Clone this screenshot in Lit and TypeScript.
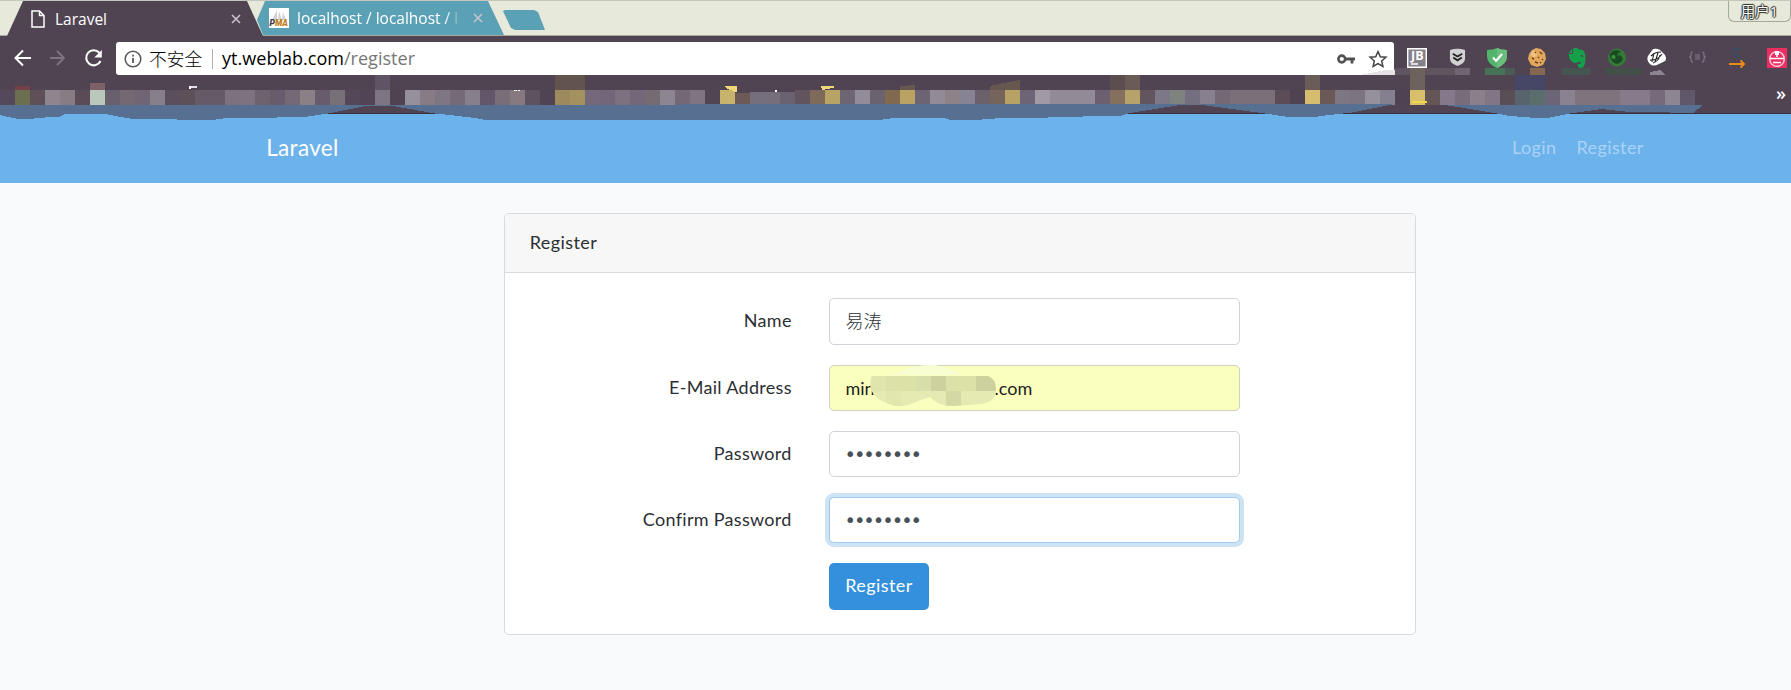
import { LitElement, html, svg, css } from "lit";
import { customElement } from "lit/decorators.js";

// Bookmark mosaic, one colour for every 15px cell.
const TILES = (
  "54485a 6b6f4f 5f5058 8e858f 877c84 5a4b56 b9c8bb 69606e 746873 6f6574 87808a 5b4f5c 5d5058 665a68 665a68 7d717d " +
  "7d7280 6f626f 665c6b 746a76 8a8086 665c6b 777079 54475a 524454 7e7584 4f4352 95909c 877c85 7e7782 756a76 87808a " +
  "61566a 796d78 86797f 5d5260 4f4354 9c8a5c a3925f 73697a 72667a 7c717f 72687a 756b72 8d8691 736875 7f7580 514453 " +
  "c7b36b 6d5a56 756e7c 776e7b 6b6271 61545f 7d6a58 b7a366 6d6571 928b99 6b6270 80694f b9a263 6d6473 928a96 8d8288 " +
  "868394 6c616b 75645c b7a167 6d6575 a199a6 928b97 928b97 928b97 6a6070 84705c b7a36a 62555f 7d7787 7f837f 746f80 " +
  "88808f 736876 7b6f7a 7b6f7a 7b6f7a 5b4c58 4f4352 d5bd70 6a5956 7d7683 7c7480 968f9c 858090 4f4353 d8bf6c 655556 " +
  "83798a 776c78 8a808b 817686 594d56 57646b 5b6d6d 6b6577 8a8290 7f737d 7f737d 7f737d 857b8a 857b8a 756b7a 8e8593 60586a"
).split(" ");

// x, y, width, height, colour of the fainter cells above the main row.
const SPOTS: [number, number, number, number, string][] = [
  [15, 86, 15, 4, "#74404a"], [90, 83, 15, 7, "#7d6167"], [375, 75, 15, 15, "#5f5465"],
  [555, 75, 30, 15, "#62534f"], [1110, 75, 15, 15, "#5c4d4e"], [1125, 75, 15, 15, "#6b5b57"],
  [1305, 75, 15, 15, "#6b5c57"], [1410, 68, 15, 22, "#6e625e"], [1515, 75, 30, 15, "#464666"],
  [1394, 68, 16, 7, "#5f5562"], [1425, 68, 30, 7, "#60555f"], [1455, 68, 15, 7, "#6e6571"],
  [1485, 68, 20, 7, "#467355"], [1505, 68, 10, 7, "#4c5a55"], [1530, 68, 15, 7, "#866850"],
  [1562, 68, 28, 7, "#455650"], [1605, 68, 37, 7, "#43504a"],
  [189, 86, 8, 2, "#e5dfe8"], [189, 86, 2, 3, "#ffffff"], [514, 90, 3, 1, "#ffffff"], [518, 90, 2, 1, "#ffffff"], [775, 90, 2, 2, "#ffffff"],
  [1412, 101, 15, 2, "#f0d84a"],
];

@customElement("browser-chrome")
class BrowserChrome extends LitElement {
  static styles = css`
    :host { display: block; position: relative; width: 1791px; height: 114px; background: #504453; color: #fff; font-family: "Open Sans", "Noto Sans CJK SC", sans-serif; }
    svg { display: block; flex: none; overflow: visible; }
    .strip { display: flex; height: 36px; background: #e7e9da; box-sizing: border-box; border-bottom: 1px solid #a9a9a2; border-top: 1px solid #c5c7be; }
    .tab { display: flex; align-items: center; height: 35px; box-sizing: border-box; font-size: 15.5px; }
    .tab span { flex: 1; white-space: nowrap; overflow: hidden; line-height: 24px; }
    .one { width: 256px; margin-left: 7px; padding: 0 22px 0 24px; background: #504453; clip-path: polygon(16px 0, 240px 0, 256px 100%, 0 100%); }
    .one svg:first-child { margin-right: 10px; }
    .two { width: 247px; height: 34px; margin-left: -6px; padding: 0 21px 0 12px; background: #5ba1b6; clip-path: polygon(8px 0, 231px 0, 247px 100%, 6px 100%, 0 55%); }
    .two svg:first-child { margin-right: 8px; }
    .two span { -webkit-mask-image: linear-gradient(90deg, #000 148px, transparent 164px); mask-image: linear-gradient(90deg, #000 148px, transparent 164px); }
    .new { width: 42px; height: 20px; margin: 9px 0 0 -1px; background: #5ba1b6; clip-path: polygon(2px 0, 31px 0, 35px 2px, 42px 20px, 12px 20px, 8px 18px, 0 1px); }
    .user { margin-left: auto; width: 63px; height: 21px; border: 1px solid #a6a79f; border-top: 0; border-radius: 0 0 6px 6px; box-sizing: border-box; text-align: center; font-size: 14.5px; line-height: 22px; text-shadow: 1px 0 1px #222, -1px 0 1px #222, 0 1px 1px #222, 0 -1px 1px #222; }
    .bar { display: flex; align-items: center; height: 39px; box-sizing: border-box; }
    .nav { display: flex; flex: none; width: 116px; padding: 5px 0 0 12px; box-sizing: border-box; gap: 13px; }
    .omni { display: flex; flex: none; align-items: center; width: 1278px; height: 33px; margin-top: 6px; background: #fff; border-radius: 3px; color: #000; box-sizing: border-box; padding: 0 7px 0 8px; font-size: 18px; }
    .cn { font-family: "Noto Sans CJK SC", sans-serif; font-weight: 300; font-size: 17.7px; margin-left: 7px; line-height: 26px; padding-bottom: 2px; }
    .sep { width: 1px; height: 20px; background: #b0b0b0; margin: 0 9px 0 10px; }
    .url { flex: 1; line-height: 26px; letter-spacing: 0.02px; padding-bottom: 2px; }
    .url i { font-style: normal; color: #777; }
    .keys { display: flex; gap: 14px; }
    .ext { display: flex; flex: none; margin-left: 3px; padding-top: 5px; }
    .ext div { width: 40px; display: flex; justify-content: center; flex: none; }
    .mosaic { position: absolute; left: 0; top: 0; z-index: 1; }
    .more { position: absolute; left: 1776px; top: 81px; font-size: 18px; font-weight: 600; line-height: 24px; }
    .jb { font: 700 12.5px "Open Sans", sans-serif; }
    .pma { font: italic 900 8.500px "Roboto", sans-serif; }
  `;
  render() {
    const close = html`<svg width="10" height="10" viewBox="0 0 10 10"><path d="M1 1l8 8M9 1L1 9" stroke="#c9c2cd" stroke-width="1.6" /></svg>`;
    return html`
      <div class="strip">
        <div class="tab one">
          <svg width="14" height="18" viewBox="0 0 14 18"><path d="M1 1h7.5L13 5.500V17H1zM8.500 1v4.500H13" fill="none" stroke="#fff" stroke-width="1.5" /></svg>
          <span>Laravel</span>${close}
        </div>
        <div class="tab two">
          <svg width="20" height="20" viewBox="0 0 20 20"><path d="M0 0h20v20H0z" fill="#fff" /><path d="M3 12L8 2v10zM9 12l1-9 3 9zM13 12l1-8 3 8z" fill="#d2d2d2" /><text x="0.500" y="18" class="pma" fill="#363650">P<tspan fill="#bf7b15">MA</tspan></text></svg>
          <span>localhost / localhost / l</span>${close}
        </div>
        <div class="new"></div>
        <div class="user">用户1</div>
      </div>
      <div class="bar">
        <div class="nav">
          <svg width="22" height="22" viewBox="0 0 22 22"><path d="M19 11H4M11 3.500L3.500 11l7.500 7.500" fill="none" stroke="#fff" stroke-width="2" /></svg>
          <svg width="22" height="22" viewBox="0 0 22 22"><path d="M3 11h14M10 4l7 7-7 7" fill="none" stroke="#7e7481" stroke-width="1.8" /></svg>
          <svg width="24" height="22" viewBox="0 0 24 22"><path d="M18.500 14A7.500 7.500 0 1 1 17.300 5.800" fill="none" stroke="#fff" stroke-width="2.100" /><path d="M19.800 3v7.500h-7.500z" fill="#fff" /></svg>
        </div>
        <div class="omni">
          <svg width="18" height="18" viewBox="0 0 18 18"><circle cx="9" cy="9" r="7.800" fill="none" stroke="#5a5a5a" stroke-width="1.600" /><path d="M9 8v5M9 4.800v1.800" stroke="#5a5a5a" stroke-width="1.800" /></svg>
          <span class="cn">不安全</span><span class="sep"></span>
          <span class="url">yt.weblab.com<i>/register</i></span>
          <div class="keys">
            <svg width="18" height="18" viewBox="0 0 18 18"><circle cx="4.800" cy="9" r="3.400" fill="none" stroke="#505050" stroke-width="2.600" /><path d="M8 9h10M15 9v4.500" stroke="#505050" stroke-width="2.800" /></svg>
            <svg width="18" height="18" viewBox="0 0 18 18"><path d="M9 1.500l2.300 5.200 5.600.5-4.200 3.700 1.200 5.500L9 13.500l-4.900 2.900 1.200-5.500L1.100 7.200l5.600-.5z" fill="none" stroke="#444" stroke-width="1.500" /></svg>
          </div>
        </div>
        <div class="ext">
          <div><svg width="20" height="20" viewBox="0 0 20 20"><path d="M.7.7h18.600v18.600H.7z" fill="#85808a" stroke="#fff" stroke-width="1.400" /><text x="4" y="12" class="jb" fill="#fff">JB</text><path d="M4 16h7" stroke="#fff" stroke-width="1.500" /></svg></div>
          <div><svg width="17" height="19" viewBox="0 0 18 20"><path d="M1 2Q9-.5 17 2v9q0 5-8 8-8-3-8-8z" fill="#d2d2d4" /><path d="M4 6l5 3 5-3M4.500 10l4.500 3L13.500 10" fill="none" stroke="#222" stroke-width="1.900" /></svg></div>
          <div><svg width="20" height="20" viewBox="0 0 20 20"><path d="M0 2q6 0 10-2 4 2 10 2v6q0 8-10 12Q0 16 0 8z" fill="#52b56b" /><path d="M10 0q4 2 10 2v6q0 8-10 12z" fill="#6bbd7c" /><path d="M6 9.500l3 3.500 6-7" fill="none" stroke="#fff" stroke-width="2" /></svg></div>
          <div><svg width="19" height="19" viewBox="0 0 19 19"><path d="M4 2l4-2 5 1 4 4 1 6-3 6-6 2-6-2-3-6 1-5z" fill="#e2a65c" /><circle cx="6" cy="6" r="3" fill="#f0c27f" /><path d="M7 4l1 1M12 4l2 2M4 10l2 1M10 9l1 1M14 11l1 1M7 14l3 1M12 15l1-1" stroke="#6e4423" stroke-width="1.700" /></svg></div>
          <div><svg width="18" height="20" viewBox="0 0 18 20"><path d="M5 .5Q9-.8 11 1.500l4 .7q2.600 1.800 2.400 8.800Q17 20 13 20q-4 0-3.300-3.800 2.300-1.200 3.300.3-.3-3-2.300-3-1 2-4.200 1.500Q1.500 14 .5 6h4Q5.500 5.500 5 .5z" fill="#15a04a" /><path d="M.5 5l3.700-4v4z" fill="#15a04a" /><path d="M12.500 8q2-1 2.500 1" stroke="#504453" fill="none" stroke-width="1.200" /></svg></div>
          <div><svg width="20" height="19" viewBox="0 0 19 19"><circle cx="9.500" cy="9.500" r="9" fill="#347c36" /><path d="M2 6q6-7 12-2-4 0-4 4 4-2 5 2t-6 6Q3 14 2 6" fill="#174d20" /><circle cx="6" cy="9" r="2" fill="#40923e" /></svg></div>
          <div><svg width="20" height="19" viewBox="0 0 20 19"><path d="M6 1q4-1 7 1l5 5q2 4 0 6l-6 3q-6 3-9 0-4-4-2-8z" fill="#fff" /><path d="M4 8q4-4 10-4M3 12q7 1 12-6M6 15q6-2 7-8M7 5l-2 9M11 5l-3 9" stroke="#222" stroke-width="1.100" fill="none" /></svg></div>
          <div><svg width="17" height="18" viewBox="0 0 17 18"><path d="M4 4Q2 4 2 6v2L.8 9 2 10v2q0 2 2 2M13 4q2 0 2 2v2l1.200 1L15 10v2q0 2-2 2M6 7h5M6 9h5M6 11h5" stroke="#83798a" stroke-width="1.100" fill="none" /></svg></div>
          <div><svg width="18" height="20" viewBox="0 0 18 20"><path d="M13 2Q5 0 5 4t6 4" fill="none" stroke="#3e4a5e" stroke-width="3" /><path d="M1 16h15M12.500 12.500l3.500 3.500-3.500 3.500" stroke="#ef8a16" stroke-width="1.900" fill="none" /></svg></div>
          <div><svg width="20" height="20" viewBox="0 0 20 20"><path d="M0 0h20v20H0z" fill="#ee2e61" /><circle cx="10" cy="11" r="7.300" fill="none" stroke="#ffc9d7" stroke-width="1.500" /><path d="M3 10.500h14M6 14.500h8" stroke="#fff" stroke-width="1.700" /><path d="M10 9V4" stroke="#fff" stroke-width="1.500" /><path d="M8 3h4v4H8z" fill="#fff" /></svg></div>
        </div>
      </div>
      <svg class="mosaic" width="1791" height="122" viewBox="0 0 1791 122" shape-rendering="crispEdges">
        <path d="M0 113h1791v1H0z" fill="#3c323e" />
        ${TILES.map((c, i) => svg`<rect x=${i * 15} y="90" width="15" height="15" fill=${"#" + c} />`)}
        <path d="M735 90h15v3h-15zM750 90h45v2h-45z" fill="#504453" />
        ${SPOTS.map(([x, y, w, h, c]) => svg`<rect x=${x} y=${y} width=${w} height=${h} fill=${c} />`)}
        <path d="M724 86h13v6h-2l-9-4zM821 86h13v2l-9 1v1h-3z" fill="#efd878" />
        <path d="M990 86l30-6v10h-30zM900 86l15-1v5h-15z" fill="#66574f" />
        <path d="M1360 75l25-5h10v5z" fill="#e4e2e5" />
        <path d="M1650 72l10-2 6 5h-16z" fill="#8d8492" />
        <path d="M0 105V115l8 2 10 2h12l8-1 22-1.500L65 114h40l10 2 15 2.500h40l10 1.500h33l10-1.500L305 117l23-3.500 40-8h22l45 8 15 1.500 25 3 10 2h395l10-1.500 10-.5h44l6 2h25l20-1.500 80-1.500 15-1h30l10-3 50-8 15-1 70 9.500 20 3 15 .5h15l10-1.500 27-3 42-8.500z" fill="#576f91" />
        <path d="M1445 105l25 4 27 4.500 13 2.500 20 1.500h20l20-4 31-4.500 24 2.500 68 1.500 10-8z" fill="#576f91" />
      </svg>
      <div class="more">»</div>
    `;
  }
}

@customElement("app-root")
class AppRoot extends LitElement {
  static styles = css`
    :host { display: block; width: 1791px; height: 690px; overflow: hidden; background: #f8fafc; font-family: "Lato", "Noto Sans CJK SC", sans-serif; font-size: 18px; color: #2b2f33; }
    .page { width: 1920px; }
    .topnav { height: 69px; background: #6cb2eb; display: flex; justify-content: center; }
    .container { width: 1387.5px; display: flex; align-items: center; justify-content: space-between; height: 66px; }
    .brand { color: #fff; font-size: 22.5px; letter-spacing: 0.3px; }
    .links { display: flex; gap: 20px; padding-right: 10px; color: #abd3f5; letter-spacing: 0.4px; }
    .card { width: 912.5px; height: 422px; margin: 30px auto 0; border: 1px solid #d9dadb; border-radius: 5px; background: #fff; box-sizing: border-box; overflow: hidden; }
    .head { height: 59px; border-bottom: 1px solid #d9dadb; background: #f7f7f7; padding: 0 25px; line-height: 57px; box-sizing: border-box; letter-spacing: 0.4px; }
    .body { padding-top: 25.4px; display: flex; flex-direction: column; gap: 20px; }
    .row { display: flex; height: 46.25px; gap: 37.2px; }
    .label { width: 287px; text-align: right; line-height: 45px; letter-spacing: 0.3px; }
    .input { position: relative; width: 411px; border: 1px solid #ced4da; border-radius: 5px; box-sizing: border-box; padding: 0 15.5px; line-height: 44px; color: #495057; background: #fff; }
    .han { font-family: "Noto Sans CJK SC", sans-serif; font-weight: 300; line-height: 43px; color: #2c3238; }
    .auto { background: #faffbd; color: #1d1d1d; border-color: #cfd2bd; display: flex; }
    .auto .a { width: 24px; flex: none; }
    .auto .b { margin-left: 125px; letter-spacing: 0.1px; }
    .blob { position: absolute; left: 40px; top: -3px; }
    .dots { font-family: "DejaVu Sans", sans-serif; font-size: 19.5px; letter-spacing: -2.05px; line-height: 46px; padding-left: 14.5px; }
    .focus { border-color: #a1cbef; box-shadow: 0 0 0 4px #cce3f4; }
    .btn { width: 100px; background: #3490dc; border-radius: 5px; color: #fff; text-align: center; line-height: 45px; letter-spacing: 0.4px; }
  `;
  render() {
    return html`
      <browser-chrome></browser-chrome>
      <div class="page">
        <div class="topnav"><div class="container">
          <div class="brand">Laravel</div>
          <div class="links"><span>Login</span><span>Register</span></div>
        </div></div>
        <div class="card">
          <div class="head">Register</div>
          <div class="body">
            <div class="row"><div class="label">Name</div><div class="input han">易涛</div></div>
            <div class="row"><div class="label">E-Mail Address</div>
              <div class="input auto"><span class="a">min</span><span class="b">.com</span>
                <svg class="blob" width="130" height="46" viewBox="869 362 130 46">
                  <defs><clipPath id="c"><path d="M871 375h116q8 3 8 13 0 13-14 15l-30 2q-14 0-22-9-8 2-16 6-12 6-25 1-13-4-18-14-2-8 1-14z" /></clipPath></defs>
                  <path d="M905 369q8-5 25-5 10 0 20 5l10 5h-75z" fill="#f8fed2" />
                  <g clip-path="url(#c)">
                    <path d="M868 370h130v36H868z" fill="#e4eab1" />
                    <path d="M870 370h15v20h-15z" fill="#dfe5ad" />
                    <path d="M885 370h30v20h-30zM945 370h15v20h-15zM960 370h15v20h-15z" fill="#dbe1a7" />
                    <path d="M915 370h15v20h-15z" fill="#d8dea8" />
                    <path d="M930 370h15v20h-15zM975 370h22v20h-22z" fill="#ccd19e" />
                    <path d="M945 390h15v16h-15z" fill="#d3d8a5" />
                    <path d="M885 390h15v16h-15z" fill="#e0e6ac" />
                  </g>
                </svg>
              </div></div>
            <div class="row"><div class="label">Password</div><div class="input dots">••••••••</div></div>
            <div class="row"><div class="label">Confirm Password</div><div class="input dots focus">••••••••</div></div>
            <div class="row"><div class="label"></div><div class="btn">Register</div></div>
          </div>
        </div>
      </div>
    `;
  }
}
